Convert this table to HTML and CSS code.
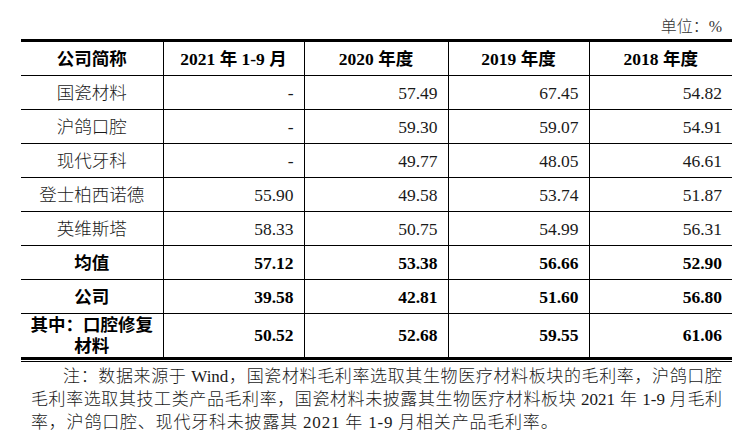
FILE: index.html
```html
<!DOCTYPE html>
<html lang="zh-CN">
<head>
<meta charset="utf-8">
<title>毛利率对比</title>
<link rel="stylesheet" href="styles.css">
</head>
<body>
<div class="wrap">
  <div class="unit">单位：%</div>
  <table class="grid">
    <colgroup>
      <col class="c1"><col class="c2"><col class="c3"><col class="c4"><col class="c5">
    </colgroup>
    <thead>
      <tr>
        <th>公司简称</th>
        <th>2021 年 1-9 月</th>
        <th>2020 年度</th>
        <th>2019 年度</th>
        <th>2018 年度</th>
      </tr>
    </thead>
    <tbody>
      <tr><td class="name">国瓷材料</td><td>-</td><td>57.49</td><td>67.45</td><td>54.82</td></tr>
      <tr><td class="name">沪鸽口腔</td><td>-</td><td>59.30</td><td>59.07</td><td>54.91</td></tr>
      <tr><td class="name">现代牙科</td><td>-</td><td>49.77</td><td>48.05</td><td>46.61</td></tr>
      <tr><td class="name">登士柏西诺德</td><td>55.90</td><td>49.58</td><td>53.74</td><td>51.87</td></tr>
      <tr><td class="name">英维斯塔</td><td>58.33</td><td>50.75</td><td>54.99</td><td>56.31</td></tr>
      <tr class="bold"><td class="name">均值</td><td>57.12</td><td>53.38</td><td>56.66</td><td>52.90</td></tr>
      <tr class="bold"><td class="name">公司</td><td>39.58</td><td>42.81</td><td>51.60</td><td>56.80</td></tr>
      <tr class="bold last"><td class="name">其中：口腔修复<br>材料</td><td>50.52</td><td>52.68</td><td>59.55</td><td>61.06</td></tr>
    </tbody>
  </table>
  <div class="thin-rule"></div>
  <p class="note">
    <span class="ln first">注：数据来源于 Wind，国瓷材料毛利率选取其生物医疗材料板块的毛利率，沪鸽口腔</span>
    <span class="ln">毛利率选取其技工类产品毛利率，国瓷材料未披露其生物医疗材料板块 2021 年 1-9 月毛利</span>
    <span class="ln end">率，沪鸽口腔、现代牙科未披露其 2021 年 1-9 月相关产品毛利率。</span>
  </p>
</div>
</body>
</html>
```
FILE: styles.css
```css
html, body {
  margin: 0;
  padding: 0;
  background: #ffffff;
}

body {
  font-family: "Liberation Serif", "Noto Sans CJK SC", serif;
  color: #1a1a1a;
}

.wrap {
  width: 711px;
  margin-left: 21px;
}

.unit {
  padding: 17px 10px 0 0;
  height: 20px;
  line-height: 20px;
  margin-bottom: 2px;
  text-align: right;
  font-size: 16px;
  font-weight: 300;
  color: #333;
}

.grid {
  width: 711px;
  border-collapse: collapse;
  table-layout: fixed;
  border-top: 3px solid #000;
}

.c1 { width: 142px; }
.c2 { width: 141px; }
.c3 { width: 144px; }
.c4 { width: 141px; }
.c5 { width: 143px; }

.grid th,
.grid td {
  height: 33px;
  padding: 0 10px 0 6px;
  border-bottom: 1px solid #000;
  border-left: 1px solid #000;
  font-size: 17.5px;
  line-height: 22px;
  text-align: right;
  vertical-align: middle;
}

.grid th:first-child,
.grid td:first-child {
  border-left: none;
}

.grid th {
  font-weight: 700;
  text-align: center;
  color: #000;
  padding: 0 4px;
}

.grid td {
  font-weight: 300;
}

.grid td.name {
  text-align: center;
  padding: 0 4px;
}

.grid tr.bold td {
  font-weight: 700;
  color: #000;
}

.grid tr.last td {
  height: 43px;
  border-bottom: 3px solid #000;
  line-height: 21px;
}

.thin-rule {
  height: 1px;
  margin-top: 1px;
  background: #000;
}

.note {
  margin: 3px 10px 0 10px;
  font-size: 17px;
  line-height: 23px;
  font-weight: 300;
  color: #1a1a1a;
}

.ln {
  display: block;
  text-align: justify;
  text-align-last: justify;
}

.ln.first {
  text-indent: 32px;
}

.ln.end {
  text-align: left;
  text-align-last: left;
  letter-spacing: 0.8px;
}
```
